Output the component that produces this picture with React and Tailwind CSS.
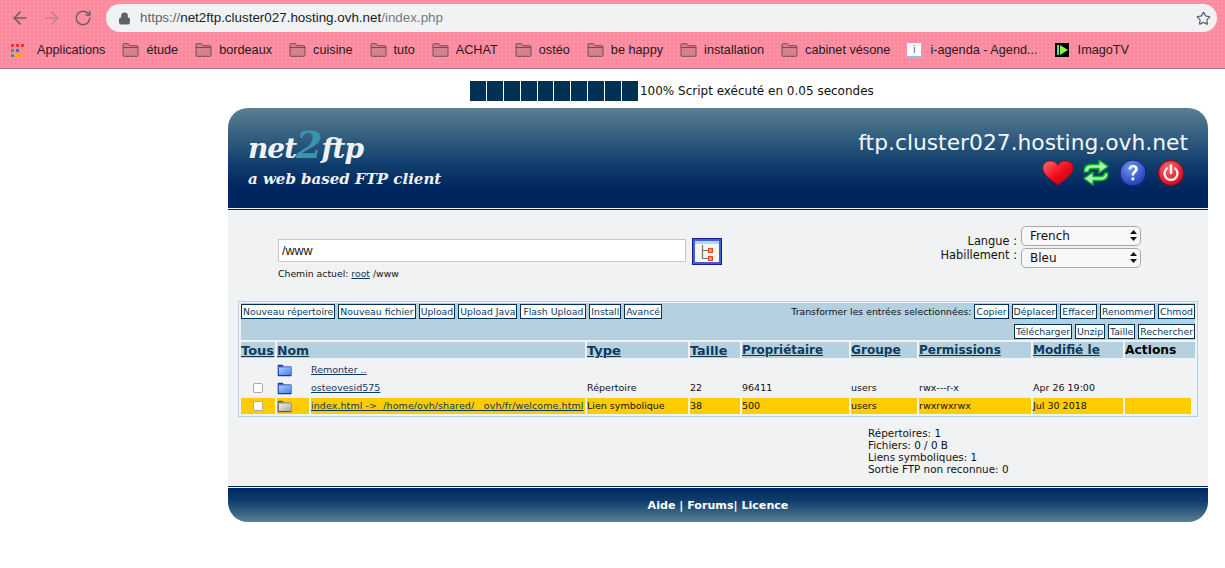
import React from 'react';
import { ArrowLeft, ArrowRight, RotateCw, Lock, Star } from 'lucide-react';

const bookmarks = ['étude', 'bordeaux', 'cuisine', 'tuto', 'ACHAT', 'ostéo', 'be happy', 'installation', 'cabinet vésone'];
const leftButtons = ['Nouveau répertoire', 'Nouveau fichier', 'Upload', 'Upload Java', 'Flash Upload', 'Install', 'Avancé'];
const rightButtons = ['Copier', 'Déplacer', 'Effacer', 'Renommer', 'Chmod'];
const rightButtons2 = ['Télécharger', 'Unzip', 'Taille', 'Rechercher'];

// widths of the bold headers differ a bit per word from the reference font
const sortHeaders = [
  { label: 'Type', size: 'text-[13px]' },
  { label: 'Taille', size: 'text-[12.700px]' },
  { label: 'Propriétaire', size: 'text-[11.900px]' },
  { label: 'Groupe', size: 'text-[12.100px]' },
  { label: 'Permissions', size: 'text-[12px]' },
  { label: 'Modifié le', size: 'text-[12.100px]' },
];

const BookmarkFolder = () => (
  <svg width="17" height="14" viewBox="0 0 17 14" className="shrink-0">
    <path d="M1 3V1.600C1 1 1.400.7 2 .7h4.500l1.200 2H15c.6 0 1 .4 1 1v8.600c0 .5-.4 1-1 1H2c-.6 0-1-.5-1-1z" fill="#d9808f" stroke="#6b5057" strokeWidth="1" />
    <path d="M1 4.500h15" stroke="#6b5057" strokeWidth="1" />
  </svg>
);

const AppsGrid = () => {
  const colors = ['#e33', '#e33', '#e33', '#2a7', '#27e', '#fa0', '#2a7', '#fa0', '#fa0'];
  return (
    <div className="grid grid-cols-3 gap-[2px] w-[13px] shrink-0 mr-[13px]">
      {colors.map((c, i) => (
        <div key={i} className="w-[3px] h-[3px]" style={{ background: c }} />
      ))}
    </div>
  );
};

const FolderIcon = ({ grey }) => (
  <svg width="16" height="13" viewBox="0 0 16 13">
    <defs>
      <linearGradient id="folderBlue" x1="0" y1="0" x2="1" y2="1">
        <stop offset="0" stopColor="#a9d0fb" />
        <stop offset="1" stopColor="#3f7fe8" />
      </linearGradient>
      <linearGradient id="folderGrey" x1="0" y1="0" x2="1" y2="1">
        <stop offset="0" stopColor="#eeeeea" />
        <stop offset="1" stopColor="#a8a69e" />
      </linearGradient>
    </defs>
    <path d="M.7 11.500V1.500C.7 1 1 .7 1.500.7h4l1.300 1.600h7c.5 0 .8.3.8.8v8.400c0 .5-.3.8-.8.8H1.500c-.5 0-.8-.3-.8-.8z" fill={grey ? '#5f5c54' : '#1a2fc8'} />
    <path d="M1.800 4h11.600c.5 0 .9.3.9.8v6.300H1.800z" fill={grey ? 'url(#folderGrey)' : 'url(#folderBlue)'} />
    <path d="M1.500 3.200h13" stroke={grey ? '#fff' : '#dbe9fc'} strokeWidth=".8" />
  </svg>
);

const Heart = () => (
  <svg width="32" height="26" viewBox="0 0 32 26">
    <defs>
      <linearGradient id="heartFill" x1="0" y1="0" x2="1" y2="1">
        <stop offset="0" stopColor="#ff6a78" />
        <stop offset=".5" stopColor="#f0101c" />
        <stop offset="1" stopColor="#a80010" />
      </linearGradient>
    </defs>
    <path d="M16 25C8 19 .8 14.500 .8 8 .8 3.500 4.500 1 8.500 1 12 1 14.800 2.800 16 5.500 17.200 2.800 20 1 23.500 1 27.500 1 31.200 3.500 31.200 8 31.200 14.500 24 19 16 25z" fill="url(#heartFill)" stroke="#b00012" strokeWidth=".8" />
  </svg>
);

const Refresh = () => (
  <svg width="28" height="29" viewBox="0 0 28 29">
    <path d="M2 14c0-5 2.500-7.500 7-7.500h8V2l9 6.500-9 6.500v-4.500H10c-2 0-3.500 1-3.500 3.500z" fill="#a8f5a8" stroke="#10b030" strokeWidth="1.500" strokeLinejoin="round" />
    <path d="M26 15c0 5-2.500 7.500-7 7.500h-8V27l-9-6.500L11 14v4.500h8c2 0 3.500-1 3.500-3.500z" fill="#a8f5a8" stroke="#10b030" strokeWidth="1.500" strokeLinejoin="round" />
  </svg>
);

const Help = () => (
  <svg width="28" height="28" viewBox="0 0 28 28">
    <defs>
      <radialGradient id="helpFill" cx=".4" cy=".3" r=".8">
        <stop offset="0" stopColor="#6f97f0" />
        <stop offset="1" stopColor="#1a2fb0" />
      </radialGradient>
    </defs>
    <circle cx="14" cy="14" r="13" fill="url(#helpFill)" stroke="#10207a" />
    <path d="M9.500 10.500c0-3 2-4.500 4.700-4.500s4.600 1.600 4.600 4c0 3.500-3.600 3.500-3.600 6.500h-2.600c0-4.200 3.300-4.200 3.300-6.400 0-1-.7-1.800-1.800-1.800s-1.900.8-1.900 2.200z" fill="#fff" />
    <rect x="12.600" y="18.500" width="2.600" height="2.800" fill="#fff" />
  </svg>
);

const Power = () => (
  <svg width="26" height="26" viewBox="0 0 26 26">
    <defs>
      <radialGradient id="powerFill" cx=".4" cy=".3" r=".8">
        <stop offset="0" stopColor="#ff6a70" />
        <stop offset="1" stopColor="#c80010" />
      </radialGradient>
    </defs>
    <circle cx="13" cy="13" r="12.500" fill="url(#powerFill)" stroke="#a00010" />
    <path d="M8.800 8.500a6.500 6.500 0 1 0 8.400 0" fill="none" stroke="#fff" strokeWidth="2.200" strokeLinecap="round" />
    <path d="M13 5.500v7.500" stroke="#fff" strokeWidth="2.400" strokeLinecap="round" />
  </svg>
);

const TreeIcon = () => (
  <svg width="30" height="27" viewBox="0 0 30 27" className="shrink-0">
    <rect x=".5" y=".5" width="29" height="26" fill="#3f5fd8" stroke="#1c1c8c" />
    <rect x="3" y="3" width="24" height="21" fill="#f6f6f2" />
    <rect x="3" y="3" width="24" height="3" fill="#b8d4f4" />
    <path d="M10.500 7v13.500h6M10.500 12.500h6" stroke="#77756e" strokeWidth="1.200" fill="none" />
    <rect x="16.500" y="10.500" width="4" height="4" fill="#f5a81a" stroke="#e8452a" />
    <rect x="16.500" y="18.500" width="4" height="4" fill="#f5a81a" stroke="#e8452a" />
  </svg>
);

const SelectBox = ({ value }) => (
  <div className="relative">
    <select
      defaultValue={value}
      className="w-[120px] h-[20px] block appearance-none bg-[#f8f8f9] border border-[#a8a8a8] rounded-[5px] pl-[8px] text-[12px] text-[#111] font-['DejaVu_Sans',sans-serif]"
    >
      <option>{value}</option>
    </select>
    <svg width="7" height="11" viewBox="0 0 7 11" className="absolute right-[4px] top-[4px] pointer-events-none">
      <path d="M3.500 0L7 4H0zM3.500 11L0 7h7z" fill="#111" />
    </svg>
  </div>
);

const ToolButton = ({ label }) => (
  <button className={`h-[15px] ${label === 'Flash Upload' ? 'px-[2px]' : 'px-[1px]'} border border-[#003153] bg-white text-[#0d3a5c] text-[9.300px] leading-[12px] whitespace-nowrap`}>
    {label}
  </button>
);

const App = () => {
  return (
    <div className="w-[1225px] h-[568px] overflow-hidden bg-white font-['DejaVu_Sans',sans-serif]">
      {/* browser toolbar */}
      <div className="h-[69px] bg-[#ff8a9f] bg-[radial-gradient(#fb97a9_1px,transparent_1px)] bg-[length:4px_4px] border-b border-[#b0707c] font-['Liberation_Sans',sans-serif]">
        <div className="h-[32px] pt-[4px] flex items-center">
          <div className="w-[106px] pl-[10px] flex items-center gap-[12px] shrink-0">
            <ArrowLeft size={20} strokeWidth={2} color="#6d5f63" />
            <ArrowRight size={20} strokeWidth={2} color="#c8808e" />
            <RotateCw size={18} strokeWidth={2} color="#6d5f63" />
          </div>
          <div className="w-[1111px] h-[28px] rounded-[14px] bg-[#f1f2f4] flex items-center pl-[12px] pr-[6px]">
            <Lock size={13} fill="#5f6368" color="#5f6368" strokeWidth={2} />
            <span className="ml-[9px] text-[13.400px] text-[#202124]">
              <span className="text-[#5f6368]">https://</span>net2ftp.cluster027.hosting.ovh.net<span className="text-[#777b80]">/index.php</span>
            </span>
            <Star size={15} strokeWidth={2} color="#5f6368" className="ml-auto" />
          </div>
        </div>
        <div className="h-[36px] pt-[1px] flex items-center pl-[11px] text-[12.700px] text-[#26191c] whitespace-nowrap">
          <AppsGrid />
          <span className="mr-[17px]">Applications</span>
          {bookmarks.map((b) => (
            <span key={b} className="flex items-center gap-[7px] mr-[17px]">
              <BookmarkFolder />
              {b}
            </span>
          ))}
          <span className="flex items-center gap-[9px] mr-[17px]">
            <span className="w-[14px] h-[15px] bg-white border-b-2 border-[#8cc4e8] text-[10px] text-center leading-[13px] text-[#555]">i</span>
            i-agenda - Agend...
          </span>
          <span className="flex items-center gap-[9px]">
            <svg width="14" height="14" viewBox="0 0 14 14" className="shrink-0">
              <rect width="14" height="14" fill="#000" />
              <rect x="2" y="2" width="2" height="10" fill="#5fe08a" />
              <path d="M5 2l8 5-8 5z" fill="#8ff04a" />
            </svg>
            ImagoTV
          </span>
        </div>
      </div>

      {/* progress */}
      <div className="h-[39px] pt-[12px] pl-[470px] flex items-start">
        <div className="flex gap-[1px]">
          {Array.from({ length: 10 }).map((_, i) => (
            <div key={i} className="w-[15.900px] h-[20px] bg-[#003153]" />
          ))}
        </div>
        <span className="ml-[2px] mt-[3px] text-[12px] leading-[15px] text-[#111] whitespace-nowrap">100% Script exécuté en 0.05 secondes</span>
      </div>

      {/* main panel */}
      <div className="ml-[228px] w-[980px] h-[414px] flex flex-col bg-[#f1f2f4] rounded-[20px] overflow-hidden">
        <div className="h-[100px] shrink-0 bg-[linear-gradient(#5a7f92,#10406e_55%,#00265f_80%,#00265f)] flex justify-between">
          <div className="pl-[20px] pt-[19px] text-white italic font-bold font-['DejaVu_Serif',serif] whitespace-nowrap">
            <div className="text-[28px] leading-[44px] tracking-[-1px] text-[#f0f2f5]">
              net<span className="text-[#3a94b0] text-[38px] leading-[0]">2</span>ftp
            </div>
            <div className="text-[15px] leading-[17px] text-[#f0f2f5]">a web based FTP client</div>
          </div>
          <div className="pr-[24px] pt-[19px] flex flex-col items-end">
            <div className="-mr-[4px] text-[21.800px] leading-[32px] text-[#f4f6f8] font-['DejaVu_Sans',sans-serif] whitespace-nowrap">ftp.cluster027.hosting.ovh.net</div>
            <div className="-mt-[1px] flex items-center">
              <Heart />
              <span className="ml-[8px]"><Refresh /></span>
              <span className="ml-[9px]"><Help /></span>
              <span className="ml-[11px]"><Power /></span>
            </div>
          </div>
        </div>
        <div className="h-[1px] shrink-0 bg-[#f1f2f4]" />
        <div className="h-[1px] shrink-0 bg-[#003153]" />

        <div className="flex-1 flex flex-col min-h-0">
          {/* path + skin forms */}
          <div className="h-[91px] shrink-0 flex justify-between">
            <div className="pl-[50px] pt-[28px]">
              <div className="flex items-start gap-[6px]">
                <input
                  defaultValue="/www"
                  className="mt-[1px] w-[408px] h-[23px] bg-white border border-[#c8c8c8] px-[3px] text-[12.500px] text-[#111] font-['Liberation_Sans',sans-serif]"
                />
                <TreeIcon />
              </div>
              <div className="mt-[3px] text-[9.300px] leading-[12px] text-[#111]">
                Chemin actuel: <a className="text-[#0d3a5c] underline">root</a> /www
              </div>
            </div>
            <div className="pr-[67px] pt-[16px] flex flex-col gap-[2px] text-[11.400px] text-[#111]">
              <div className="flex items-center justify-end gap-[4px]">
                <span className="translate-y-[6px]">Langue :</span>
                <SelectBox value="French" />
              </div>
              <div className="flex items-center justify-end gap-[4px]">
                <span className="-translate-y-[2px]">Habillement :</span>
                <SelectBox value="Bleu" />
              </div>
            </div>
          </div>

          {/* file listing */}
          <div className="mx-[10px] h-[116px] shrink-0 border border-[#b5d0df] px-[2px] pt-[1px] text-[9.500px] leading-[12px] text-[#111]">
            <div className="h-[37px] bg-[#b5d0df] pt-[1px] flex justify-between">
              <div className="flex gap-[3px]">
                {leftButtons.map((b) => (
                  <ToolButton key={b} label={b} />
                ))}
              </div>
              <div className="flex flex-col items-end gap-[5px]">
                <div className="flex items-center gap-[3px]">
                  <span className="whitespace-nowrap text-[9.300px]">Transformer les entrées selectionnées:</span>
                  {rightButtons.map((b) => (
                    <ToolButton key={b} label={b} />
                  ))}
                </div>
                <div className="flex gap-[3px]">
                  {rightButtons2.map((b) => (
                    <ToolButton key={b} label={b} />
                  ))}
                </div>
              </div>
            </div>

            <div className="mt-[2px] grid grid-cols-[34px_32px_274px_101px_50px_107px_66px_112px_90px_70px] gap-x-[2px]">
              {/* headers */}
              <div className="h-[16px] bg-[#b5d0df] text-[13px] leading-[17px] font-bold text-[#0d3a5c] underline">Tous</div>
              <div className="col-span-2 h-[16px] bg-[#b5d0df] text-[12.500px] leading-[17px] font-bold text-[#0d3a5c] underline">Nom</div>
              {sortHeaders.map((h) => (
                <div key={h.label} className={`h-[16px] bg-[#b5d0df] ${h.size} leading-[17px] font-bold text-[#0d3a5c] underline whitespace-nowrap`}>{h.label}</div>
              ))}
              <div className="h-[16px] bg-[#b5d0df] text-[12.300px] leading-[17px] font-bold text-black">Actions</div>

              {/* up row */}
              <div className="h-[20px] mt-[2px]" />
              <div className="h-[20px] mt-[2px] flex items-center"><FolderIcon /></div>
              <div className="h-[20px] mt-[2px] flex items-center text-[#0d3a5c] underline">Remonter ..</div>
              <div className="col-span-7" />

              {/* directory row */}
              <div className="h-[16px] flex items-center justify-center">
                <span className="w-[10px] h-[10px] bg-white border border-[#aaa] rounded-[2px]" />
              </div>
              <div className="h-[16px] flex items-center"><FolderIcon /></div>
              <div className="h-[16px] flex items-center text-[#0d3a5c] underline">osteovesid575</div>
              <div className="h-[16px] flex items-center">Répertoire</div>
              <div className="h-[16px] flex items-center">22</div>
              <div className="h-[16px] flex items-center">96411</div>
              <div className="h-[16px] flex items-center">users</div>
              <div className="h-[16px] flex items-center">rwx---r-x</div>
              <div className="h-[16px] flex items-center">Apr 26 19:00</div>
              <div className="h-[16px]" />

              {/* symlink row */}
              <div className="h-[16px] mt-[2px] bg-[#ffcc00] flex items-center justify-center">
                <span className="w-[10px] h-[10px] bg-white border border-[#aaa] rounded-[2px]" />
              </div>
              <div className="h-[16px] mt-[2px] bg-[#ffcc00] flex items-center"><FolderIcon grey /></div>
              <div className="h-[16px] mt-[2px] bg-[#ffcc00] flex items-center text-[#0d3a5c] underline whitespace-nowrap tracking-[0.08px]">index.html -&gt;&nbsp; /home/ovh/shared/__ovh/fr/welcome.html</div>
              <div className="h-[16px] mt-[2px] bg-[#ffcc00] flex items-center">Lien symbolique</div>
              <div className="h-[16px] mt-[2px] bg-[#ffcc00] flex items-center">38</div>
              <div className="h-[16px] mt-[2px] bg-[#ffcc00] flex items-center">500</div>
              <div className="h-[16px] mt-[2px] bg-[#ffcc00] flex items-center">users</div>
              <div className="h-[16px] mt-[2px] bg-[#ffcc00] flex items-center">rwxrwxrwx</div>
              <div className="h-[16px] mt-[2px] bg-[#ffcc00] flex items-center">Jul 30 2018</div>
              <div className="h-[16px] mt-[2px] bg-[#ffcc00] w-[66px]" />
            </div>
          </div>

          {/* stats */}
          <div className="pl-[640px] pt-[10px] text-[10.400px] leading-[12px] text-[#111]">
            <div>Répertoires: 1</div>
            <div>Fichiers: 0 / 0 B</div>
            <div>Liens symboliques: 1</div>
            <div>Sortie FTP non reconnue: 0</div>
          </div>
        </div>

        <div className="h-[1px] shrink-0 bg-[#003153]" />
        <div className="h-[1px] shrink-0 bg-[#f1f2f4]" />
        <div className="h-[34px] shrink-0 pt-[3px] bg-[linear-gradient(#00265f,#10406e_40%,#5a7f92)] flex items-center justify-center text-white text-[11.100px] font-bold whitespace-nowrap">
          Aide | Forums| Licence
        </div>
      </div>
    </div>
  );
};

export default App;
